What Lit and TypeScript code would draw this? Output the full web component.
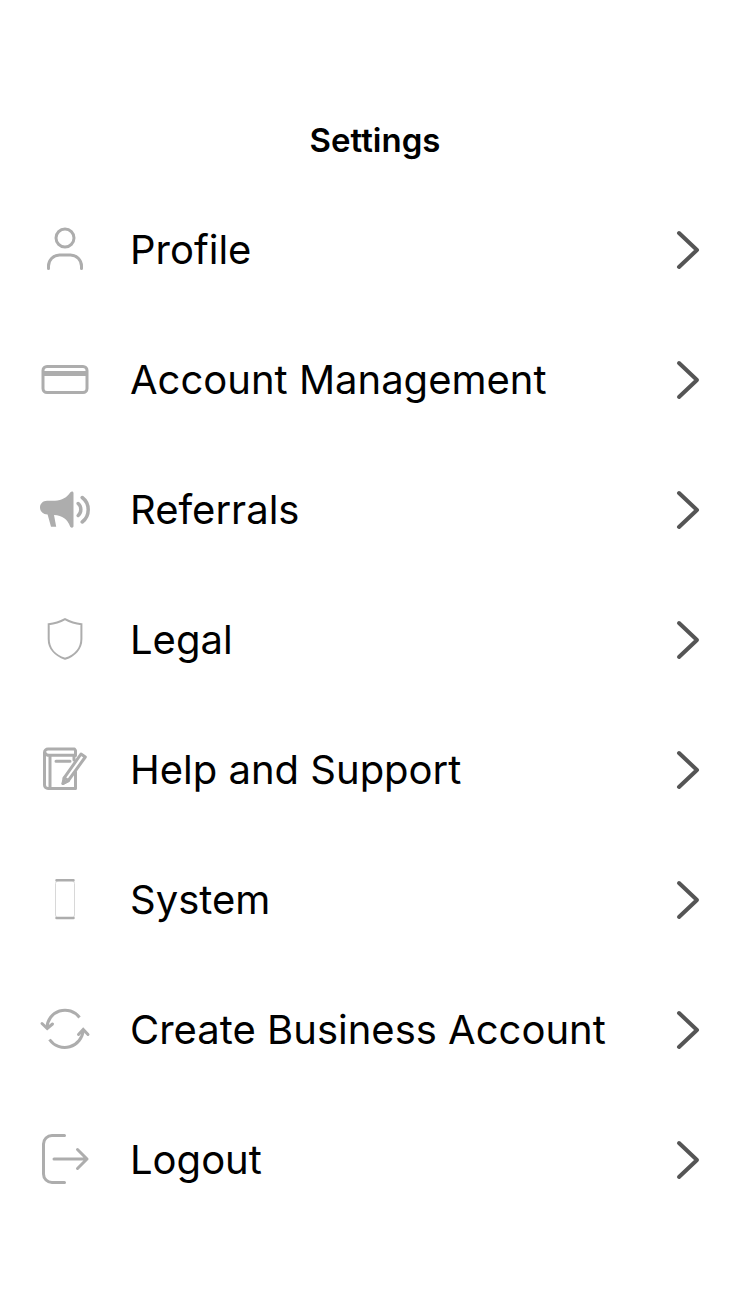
import { LitElement, html, css, svg } from "lit";
import type { SVGTemplateResult } from "lit";
import { customElement } from "lit/decorators.js";

const icons = {
  profile: svg`
    <circle cx="35" cy="23" r="9" />
    <path d="M18.500 53.500V51a11 11 0 0 1 11-11h11a11 11 0 0 1 11 11v2.500" />`,
  card: svg`
    <rect x="13" y="21.500" width="44" height="26" rx="4" />
    <path d="M13 28.500h44" stroke-width="5" stroke-linecap="butt" />`,
  megaphone: svg`
    <path class="solid" d="M17 25.700h8c7 0 12-3.500 15.200-8.200c1.200-1.600 3.300-1.400 3.300.6v33c0 1.900-2.200 2.200-3.300.6C37.500 44 32.500 40.600 24 40L26.200 51.700H21L17.600 39.500C13 39.200 10 36.500 10 32.500s3-6.800 7-6.800z" />
    <path stroke-width="3.500" d="M48.200 28.500c3.500 3 3.500 9 0 12M52.200 22.500c8 6 8 18.500 0 24.500" />`,
  shield: svg`
    <path stroke-width="2" stroke-linejoin="miter" d="M35 14.200C30 17 24.500 18.700 18.700 19.200V34c0 9.500 6.500 16.500 16.300 19.800C44.800 50.500 51.400 43.500 51.400 34V19.200C45.500 18.700 40 17 35 14.200z" />`,
  notebook: svg`
    <path d="M45.500 20.500V15.500L44.500 14H18a3.500 3.500 0 0 0-3.500 3.500V50a3.500 3.500 0 0 0 3.500 3.500H45.500V37" />
    <path d="M15 18c1 1.800 2.500 2.300 4 2.300H44V25M20 21V53M26 26.300H40" />
    <path d="M33 48.500L34 43.200L51 19L55.300 22L38 46z" />
    <path d="M33 48.500L38.500 45.500L34.200 43" />`,
  phone: svg`
    <rect x="25.500" y="15.500" width="19" height="37.500" rx="3" stroke="#d8d8d8" stroke-width="1" />
    <path stroke-width="2.500" d="M26.500 15.200h17M26.500 52.900h17" />`,
  refresh: svg`
    <path stroke-linecap="butt" d="M17 33A18 18 0 0 1 49.500 22.500M19.500 44.500A18.500 18.500 0 0 0 53.200 35" />
    <path stroke-linejoin="miter" d="M12 28.500L17.200 33.500L22.500 29M48.500 39.500L53.200 34.500L58 39.500" />`,
  logout: svg`
    <path d="M34.500 10.500H22a8.500 8.500 0 0 0-8.500 8.500V49a8.500 8.500 0 0 0 8.500 8.500H34.500M24 34H57M47.500 24.500L57 34L47.500 43.500" />`,
};

const items: { label: string; icon: SVGTemplateResult }[] = [
  { label: "Profile", icon: icons.profile },
  { label: "Account Management", icon: icons.card },
  { label: "Referrals", icon: icons.megaphone },
  { label: "Legal", icon: icons.shield },
  { label: "Help and Support", icon: icons.notebook },
  { label: "System", icon: icons.phone },
  { label: "Create Business Account", icon: icons.refresh },
  { label: "Logout", icon: icons.logout },
];

@customElement("app-root")
export class AppRoot extends LitElement {
  static styles = css`
    :host {
      display: block;
      min-height: 100vh;
      background: #fff;
      color: #000;
      font-family: Inter, "Liberation Sans", sans-serif;
    }
    .title {
      margin: 0;
      padding: 120px 0 25px;
      text-align: center;
      font-size: 33px;
      line-height: 40px;
      font-weight: 600;
    }
    .list {
      margin: 0;
      padding: 0;
      list-style: none;
    }
    .row {
      display: flex;
      align-items: center;
      width: 100%;
      height: 130px;
      padding: 0 50px 0 30px;
      border: 0;
      background: none;
      color: inherit;
      font-family: inherit;
      font-size: 40px;
      line-height: 50px;
      text-align: left;
      cursor: pointer;
    }
    .icon {
      flex: none;
      width: 70px;
      height: 70px;
      margin-right: 30px;
      fill: none;
      stroke: #adadad;
      stroke-width: 3;
      stroke-linecap: round;
      stroke-linejoin: round;
    }
    .solid {
      fill: #adadad;
      stroke: none;
    }
    .label {
      flex: 1;
    }
    .chevron {
      flex: none;
      width: 24px;
      height: 40px;
      fill: none;
      stroke: #555;
      stroke-width: 4;
      stroke-linecap: round;
      stroke-linejoin: round;
    }
  `;

  render() {
    return html`
      <main>
        <h1 class="title">Settings</h1>
        <ul class="list">
          ${items.map(
            (item) => html`
              <li>
                <button class="row" type="button">
                  <svg class="icon" viewBox="0 0 70 70" aria-hidden="true">${item.icon}</svg>
                  <span class="label">${item.label}</span>
                  <svg class="chevron" viewBox="0 0 24 40" aria-hidden="true">
                    <path d="M3 3L21 20L3 37" />
                  </svg>
                </button>
              </li>
            `
          )}
        </ul>
      </main>
    `;
  }
}
